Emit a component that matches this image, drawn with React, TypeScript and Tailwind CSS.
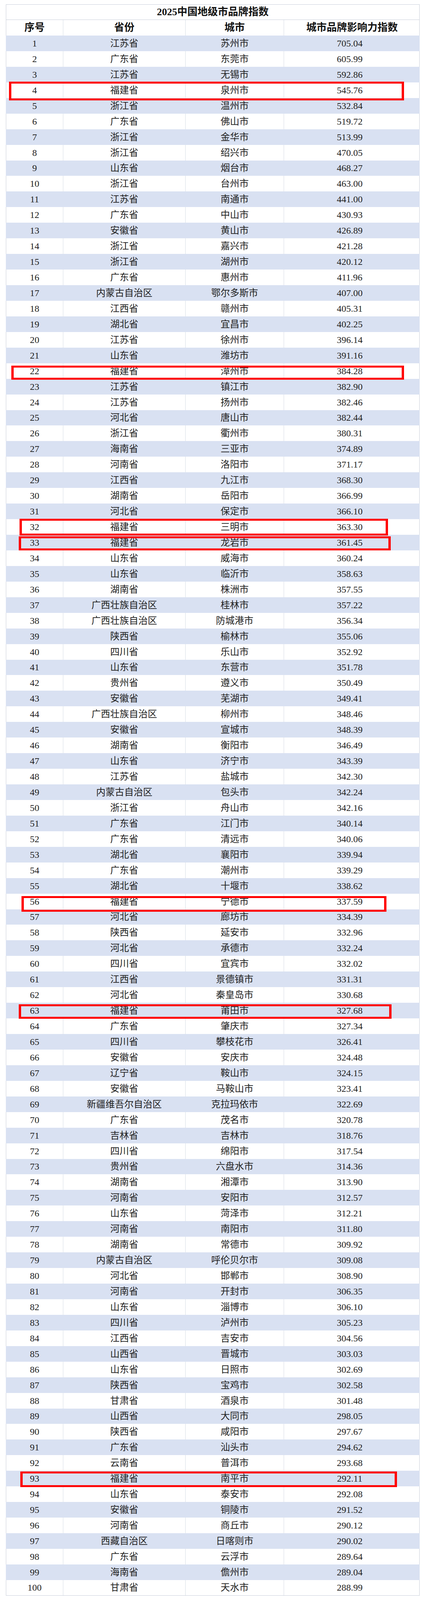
const rows: [number, string, string, string][] = [
  [1, '江苏省', '苏州市', '705.04'],
  [2, '广东省', '东莞市', '605.99'],
  [3, '江苏省', '无锡市', '592.86'],
  [4, '福建省', '泉州市', '545.76'],
  [5, '浙江省', '温州市', '532.84'],
  [6, '广东省', '佛山市', '519.72'],
  [7, '浙江省', '金华市', '513.99'],
  [8, '浙江省', '绍兴市', '470.05'],
  [9, '山东省', '烟台市', '468.27'],
  [10, '浙江省', '台州市', '463.00'],
  [11, '江苏省', '南通市', '441.00'],
  [12, '广东省', '中山市', '430.93'],
  [13, '安徽省', '黄山市', '426.89'],
  [14, '浙江省', '嘉兴市', '421.28'],
  [15, '浙江省', '湖州市', '420.12'],
  [16, '广东省', '惠州市', '411.96'],
  [17, '内蒙古自治区', '鄂尔多斯市', '407.00'],
  [18, '江西省', '赣州市', '405.31'],
  [19, '湖北省', '宜昌市', '402.25'],
  [20, '江苏省', '徐州市', '396.14'],
  [21, '山东省', '潍坊市', '391.16'],
  [22, '福建省', '漳州市', '384.28'],
  [23, '江苏省', '镇江市', '382.90'],
  [24, '江苏省', '扬州市', '382.46'],
  [25, '河北省', '唐山市', '382.44'],
  [26, '浙江省', '衢州市', '380.31'],
  [27, '海南省', '三亚市', '374.89'],
  [28, '河南省', '洛阳市', '371.17'],
  [29, '江西省', '九江市', '368.30'],
  [30, '湖南省', '岳阳市', '366.99'],
  [31, '河北省', '保定市', '366.10'],
  [32, '福建省', '三明市', '363.30'],
  [33, '福建省', '龙岩市', '361.45'],
  [34, '山东省', '威海市', '360.24'],
  [35, '山东省', '临沂市', '358.63'],
  [36, '湖南省', '株洲市', '357.55'],
  [37, '广西壮族自治区', '桂林市', '357.22'],
  [38, '广西壮族自治区', '防城港市', '356.34'],
  [39, '陕西省', '榆林市', '355.06'],
  [40, '四川省', '乐山市', '352.92'],
  [41, '山东省', '东营市', '351.78'],
  [42, '贵州省', '遵义市', '350.49'],
  [43, '安徽省', '芜湖市', '349.41'],
  [44, '广西壮族自治区', '柳州市', '348.46'],
  [45, '安徽省', '宣城市', '348.39'],
  [46, '湖南省', '衡阳市', '346.49'],
  [47, '山东省', '济宁市', '343.39'],
  [48, '江苏省', '盐城市', '342.30'],
  [49, '内蒙古自治区', '包头市', '342.24'],
  [50, '浙江省', '舟山市', '342.16'],
  [51, '广东省', '江门市', '340.14'],
  [52, '广东省', '清远市', '340.06'],
  [53, '湖北省', '襄阳市', '339.94'],
  [54, '广东省', '潮州市', '339.29'],
  [55, '湖北省', '十堰市', '338.62'],
  [56, '福建省', '宁德市', '337.59'],
  [57, '河北省', '廊坊市', '334.39'],
  [58, '陕西省', '延安市', '332.96'],
  [59, '河北省', '承德市', '332.24'],
  [60, '四川省', '宜宾市', '332.02'],
  [61, '江西省', '景德镇市', '331.31'],
  [62, '河北省', '秦皇岛市', '330.68'],
  [63, '福建省', '莆田市', '327.68'],
  [64, '广东省', '肇庆市', '327.34'],
  [65, '四川省', '攀枝花市', '326.41'],
  [66, '安徽省', '安庆市', '324.48'],
  [67, '辽宁省', '鞍山市', '324.15'],
  [68, '安徽省', '马鞍山市', '323.41'],
  [69, '新疆维吾尔自治区', '克拉玛依市', '322.69'],
  [70, '广东省', '茂名市', '320.78'],
  [71, '吉林省', '吉林市', '318.76'],
  [72, '四川省', '绵阳市', '317.54'],
  [73, '贵州省', '六盘水市', '314.36'],
  [74, '湖南省', '湘潭市', '313.90'],
  [75, '河南省', '安阳市', '312.57'],
  [76, '山东省', '菏泽市', '312.21'],
  [77, '河南省', '南阳市', '311.80'],
  [78, '湖南省', '常德市', '309.92'],
  [79, '内蒙古自治区', '呼伦贝尔市', '309.08'],
  [80, '河北省', '邯郸市', '308.90'],
  [81, '河南省', '开封市', '306.35'],
  [82, '山东省', '淄博市', '306.10'],
  [83, '四川省', '泸州市', '305.23'],
  [84, '江西省', '吉安市', '304.56'],
  [85, '山西省', '晋城市', '303.03'],
  [86, '山东省', '日照市', '302.69'],
  [87, '陕西省', '宝鸡市', '302.58'],
  [88, '甘肃省', '酒泉市', '301.48'],
  [89, '山西省', '大同市', '298.05'],
  [90, '陕西省', '咸阳市', '297.67'],
  [91, '广东省', '汕头市', '294.62'],
  [92, '云南省', '普洱市', '293.68'],
  [93, '福建省', '南平市', '292.11'],
  [94, '山东省', '泰安市', '292.08'],
  [95, '安徽省', '铜陵市', '291.52'],
  [96, '河南省', '商丘市', '290.12'],
  [97, '西藏自治区', '日喀则市', '290.02'],
  [98, '广东省', '云浮市', '289.64'],
  [99, '海南省', '儋州市', '289.04'],
  [100, '甘肃省', '天水市', '288.99'],
];

// hand-drawn red boxes, offsets relative to the row
const marks: Record<number, string> = {
  4: 'left-[7px] top-[-2px] w-[1011px] h-[48px]',
  22: 'left-[13px] top-[6px] w-[1005px] h-[36px]',
  32: 'left-[34px] top-[-1px] w-[943px] h-[43px]',
  33: 'left-[32px] top-[4px] w-[952px] h-[36px]',
  56: 'left-[39px] top-[6px] w-[934px] h-[40px]',
  63: 'left-[32px] top-[4px] w-[954px] h-[37px]',
  93: 'left-[36px] top-[2px] w-[964px] h-[40px]',
};

const font = { fontFamily: '"Liberation Serif", "Noto Sans CJK SC", serif' };

export default function App() {
  return (
    <div className="bg-white w-[1080px] pt-[11px] pb-[10px] pl-[15px] text-[#222222]" style={font}>
      <div className="w-[1059px]">
        {/* Title */}
        <div className="h-[40px] flex items-center justify-center border border-[#c9cfda] text-[26px] leading-none font-bold text-[#111111]">
          2025中国地级市品牌指数
        </div>

        {/* Header */}
        <div className="grid grid-cols-[146px_313px_252px_348px] h-[40px] border-x border-[#c9cfda] text-[26px] leading-none font-bold text-[#111111]">
          <div className="flex items-center justify-center border-r border-[#d6dce6]">序号</div>
          <div className="flex items-center justify-center border-r border-[#d6dce6]">省份</div>
          <div className="flex items-center justify-center border-r border-[#d6dce6]">城市</div>
          <div className="flex items-center justify-center">城市品牌影响力指数</div>
        </div>

        {/* Rows */}
        {rows.map(([no, prov, city, score]) => {
          const blue = no % 2 === 1;
          const line = blue ? 'border-[#d9e1f2]' : 'border-[#d6dce6]';
          return (
            <div
              key={no}
              className={`relative grid grid-cols-[146px_313px_252px_348px] h-[39.95px] text-[24px] leading-none ${
                blue ? 'bg-[#d9e1f2] border-x border-[#d9e1f2]' : 'bg-white border-x border-[#c9cfda]'
              } ${no === 100 ? 'border-b border-b-[#c9cfda]' : ''}`}
            >
              <div className={`flex items-center justify-center border-r ${line}`}>{no}</div>
              <div className={`flex items-center justify-center border-r ${line}`}>{prov}</div>
              <div className={`flex items-center justify-center border-r ${line}`}>{city}</div>
              <div className="flex items-center justify-center pr-[12px]">{score}</div>
              {marks[no] && (
                <div className={`absolute z-10 border-x-[6px] border-y-[5px] border-[#ff0000] pointer-events-none ${marks[no]}`} />
              )}
            </div>
          );
        })}
      </div>
    </div>
  );
}
